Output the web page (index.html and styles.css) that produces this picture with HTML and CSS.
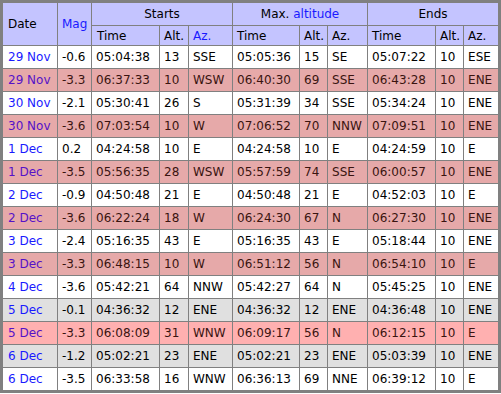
FILE: index.html
```html
<!DOCTYPE html>
<html>
<head>
<meta charset="utf-8">
<link rel="stylesheet" href="styles.css">
</head>
<body>
<div class="wrap">
<table class="passes">
<colgroup>
<col class="c-date"><col class="c-mag">
<col class="c-t1"><col class="c-a1"><col class="c-z1">
<col class="c-t2"><col class="c-a2"><col class="c-z2">
<col class="c-t3"><col class="c-a3"><col class="c-z3">
</colgroup>
<thead>
<tr class="h1">
<th rowspan="2" class="left">Date</th>
<th rowspan="2" class="left"><span class="lnk">Mag</span></th>
<th colspan="3">Starts</th>
<th colspan="3">Max. <span class="lnk">altitude</span></th>
<th colspan="3">Ends</th>
</tr>
<tr class="h2">
<th class="left">Time</th><th class="left">Alt.</th><th class="left"><span class="lnk">Az.</span></th>
<th class="left">Time</th><th class="left">Alt.</th><th class="left">Az.</th>
<th class="left">Time</th><th class="left">Alt.</th><th class="left">Az.</th>
</tr>
</thead>
<tbody>
<tr class="day"><td><span class="lnk">29 Nov</span></td><td>-0.6</td><td>05:04:38</td><td>13</td><td>SSE</td><td>05:05:36</td><td>15</td><td>SE</td><td>05:07:22</td><td>10</td><td>ESE</td></tr>
<tr class="red"><td><span class="lnk">29 Nov</span></td><td>-3.3</td><td>06:37:33</td><td>10</td><td>WSW</td><td>06:40:30</td><td>69</td><td>SSE</td><td>06:43:28</td><td>10</td><td>ENE</td></tr>
<tr class="day"><td><span class="lnk">30 Nov</span></td><td>-2.1</td><td>05:30:41</td><td>26</td><td>S</td><td>05:31:39</td><td>34</td><td>SSE</td><td>05:34:24</td><td>10</td><td>ENE</td></tr>
<tr class="red"><td><span class="lnk">30 Nov</span></td><td>-3.6</td><td>07:03:54</td><td>10</td><td>W</td><td>07:06:52</td><td>70</td><td>NNW</td><td>07:09:51</td><td>10</td><td>ENE</td></tr>
<tr class="day"><td><span class="lnk">1 Dec</span></td><td>0.2</td><td>04:24:58</td><td>10</td><td>E</td><td>04:24:58</td><td>10</td><td>E</td><td>04:24:59</td><td>10</td><td>E</td></tr>
<tr class="red"><td><span class="lnk">1 Dec</span></td><td>-3.5</td><td>05:56:35</td><td>28</td><td>WSW</td><td>05:57:59</td><td>74</td><td>SSE</td><td>06:00:57</td><td>10</td><td>ENE</td></tr>
<tr class="day"><td><span class="lnk">2 Dec</span></td><td>-0.9</td><td>04:50:48</td><td>21</td><td>E</td><td>04:50:48</td><td>21</td><td>E</td><td>04:52:03</td><td>10</td><td>E</td></tr>
<tr class="red"><td><span class="lnk">2 Dec</span></td><td>-3.6</td><td>06:22:24</td><td>18</td><td>W</td><td>06:24:30</td><td>67</td><td>N</td><td>06:27:30</td><td>10</td><td>ENE</td></tr>
<tr class="day"><td><span class="lnk">3 Dec</span></td><td>-2.4</td><td>05:16:35</td><td>43</td><td>E</td><td>05:16:35</td><td>43</td><td>E</td><td>05:18:44</td><td>10</td><td>ENE</td></tr>
<tr class="red"><td><span class="lnk">3 Dec</span></td><td>-3.3</td><td>06:48:15</td><td>10</td><td>W</td><td>06:51:12</td><td>56</td><td>N</td><td>06:54:10</td><td>10</td><td>E</td></tr>
<tr class="day"><td><span class="lnk">4 Dec</span></td><td>-3.6</td><td>05:42:21</td><td>64</td><td>NNW</td><td>05:42:27</td><td>64</td><td>N</td><td>05:45:25</td><td>10</td><td>ENE</td></tr>
<tr class="grey"><td><span class="lnk">5 Dec</span></td><td>-0.1</td><td>04:36:32</td><td>12</td><td>ENE</td><td>04:36:32</td><td>12</td><td>ENE</td><td>04:36:48</td><td>10</td><td>ENE</td></tr>
<tr class="pink"><td><span class="lnk">5 Dec</span></td><td>-3.3</td><td>06:08:09</td><td>31</td><td>WNW</td><td>06:09:17</td><td>56</td><td>N</td><td>06:12:15</td><td>10</td><td>E</td></tr>
<tr class="grey"><td><span class="lnk">6 Dec</span></td><td>-1.2</td><td>05:02:21</td><td>23</td><td>ENE</td><td>05:02:21</td><td>23</td><td>ENE</td><td>05:03:39</td><td>10</td><td>ENE</td></tr>
<tr class="day"><td><span class="lnk">6 Dec</span></td><td>-3.5</td><td>06:33:58</td><td>16</td><td>WNW</td><td>06:36:13</td><td>69</td><td>NNE</td><td>06:39:12</td><td>10</td><td>E</td></tr>
</tbody>
</table>
</div>
</body>
</html>
```
FILE: styles.css
```css
html, body {
  margin: 0;
  padding: 0;
  background: #ffffff;
}
.wrap {
  display: inline-block;
  border: 2px solid #808080;
}
.passes {
  border-collapse: separate;
  border-spacing: 0;
  table-layout: fixed;
  width: 497px;
  border-left: 1px solid #808080;
  border-top: 1px solid #808080;
  font-family: "DejaVu Sans", Verdana, sans-serif;
  font-size: 12px;
  color: #000;
}
.c-date { width: 55px; }
.c-mag { width: 34px; }
.c-t1 { width: 68px; }
.c-a1 { width: 29px; }
.c-z1 { width: 44px; }
.c-t2 { width: 67px; }
.c-a2 { width: 28px; }
.c-z2 { width: 40px; }
.c-t3 { width: 68px; }
.c-a3 { width: 28px; }
.c-z3 { width: 35px; }
.passes th,
.passes td {
  box-sizing: border-box;
  border-right: 1px solid #808080;
  border-bottom: 1px solid #808080;
  padding: 0 0 0 4px;
  white-space: nowrap;
  overflow: hidden;
  vertical-align: middle;
  text-align: left;
  font-weight: normal;
}
.passes th {
  background: #c4c4ff;
  text-align: center;
  padding: 0;
}
.passes th.left {
  text-align: left;
  padding-left: 4px;
}
.passes tr > :first-child {
  padding-left: 5px;
}
.h1 th {
  height: 23px;
}
.h2 th {
  height: 20px;
}
.passes td {
  height: 23px;
}
.lnk {
  color: #1a1aff;
}
.red td {
  background: #e6a9a9;
  color: #3a1410;
}
.red .lnk,
.pink .lnk {
  color: #5512c8;
}
.pink td {
  background: #ffb0b0;
  color: #3a1410;
}
.grey td {
  background: #e0e0e0;
}
```
